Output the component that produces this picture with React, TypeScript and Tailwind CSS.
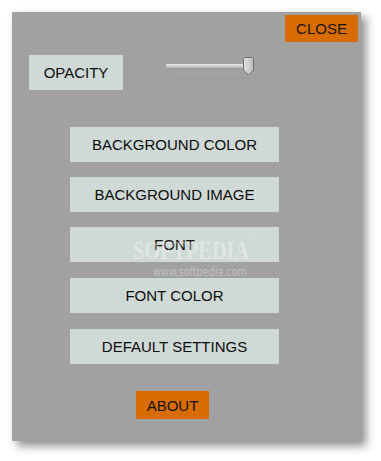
import React from "react";

const font = { fontFamily: '"Liberation Sans", Arial, sans-serif' };

const MenuButton: React.FC<{ label: string; className?: string }> = ({ label, className = "" }) => (
  <button
    className={`w-[209px] h-[35px] bg-[#cfd9d5] text-[15px] text-[#0d0d0d] leading-none flex items-center justify-center ${className}`}
  >
    {label}
  </button>
);

const OrangeButton: React.FC<{ label: string; className?: string }> = ({ label, className = "" }) => (
  <button
    className={`w-[73px] h-[27px] bg-[#d96c00] text-[15px] text-[#141414] leading-none flex items-center justify-center ${className}`}
  >
    {label}
  </button>
);

const Slider: React.FC = () => (
  <div className="relative w-[90px] h-[24px]">
    {/* track */}
    <div className="absolute left-0 top-[7px] w-[84px] h-[4px] bg-[#cfcfcf] border-t border-[#e4e4e4] border-b border-b-[#b4b4b4]" />
    {/* tick line */}
    <div className="absolute left-[5px] top-[21px] w-[78px] h-[1px] bg-[#9a9a9a]" />
    {/* thumb */}
    <svg className="absolute left-[77px] top-0" width="11" height="19" viewBox="0 0 11 19">
      <defs>
        <linearGradient id="thumb" x1="0" y1="0" x2="1" y2="0">
          <stop offset="0" stopColor="#e2e2e2" />
          <stop offset="1" stopColor="#bdbdbd" />
        </linearGradient>
      </defs>
      <path
        d="M1.5 0.5 H9.5 Q10.5 0.5 10.5 1.5 V13 L5.5 18 L0.5 13 V1.5 Q0.5 0.5 1.5 0.5 Z"
        fill="url(#thumb)"
        stroke="#6f6f6f"
      />
    </svg>
  </div>
);

export default function App() {
  return (
    <div className="w-full h-[461px] bg-white pl-[12px] pt-[12px]" style={font}>
      <div className="relative w-[349px] h-[429px] bg-[#a1a1a1] shadow-[5px_5px_9px_rgba(0,0,0,0.45)] flex flex-col">
        <div className="flex justify-end pt-[3px] pr-[3px]">
          <OrangeButton label="CLOSE" />
        </div>

        <div className="flex items-start mt-[13px] pl-[17px]">
          <div className="w-[94px] h-[35px] bg-[#cfd9d5] text-[15px] text-[#0d0d0d] leading-none flex items-center justify-center">
            OPACITY
          </div>
          <div className="ml-[43px] mt-[2px]">
            <Slider />
          </div>
        </div>

        <div className="flex flex-col ml-[58px] mt-[37px]">
          <MenuButton label="BACKGROUND COLOR" />
          <MenuButton label="BACKGROUND IMAGE" className="mt-[15px]" />
          <MenuButton label="FONT" className="mt-[15px]" />
          <MenuButton label="FONT COLOR" className="mt-[16px]" />
          <MenuButton label="DEFAULT SETTINGS" className="mt-[16px]" />
        </div>

        <div className="flex ml-[124px] mt-[27px]">
          <OrangeButton label="ABOUT" className="h-[28px]" />
        </div>

        {/* watermark */}
        <div
          className="absolute left-[121px] top-[226px] pointer-events-none text-[26px] font-bold leading-none text-white/35 origin-left scale-x-[0.78] flex items-start"
          style={{ fontFamily: '"Liberation Serif", "Times New Roman", serif' }}
        >
          SOFTPEDIA<span className="text-[9px] font-normal ml-[3px] mt-[-1px]">™</span>
        </div>
        <div
          className="absolute left-[141px] top-[254px] pointer-events-none text-[12px] leading-none text-white/35 origin-left scale-x-[0.8]"
          style={{ fontFamily: '"DejaVu Sans", sans-serif' }}
        >
          www.softpedia.com
        </div>
      </div>
    </div>
  );
}
